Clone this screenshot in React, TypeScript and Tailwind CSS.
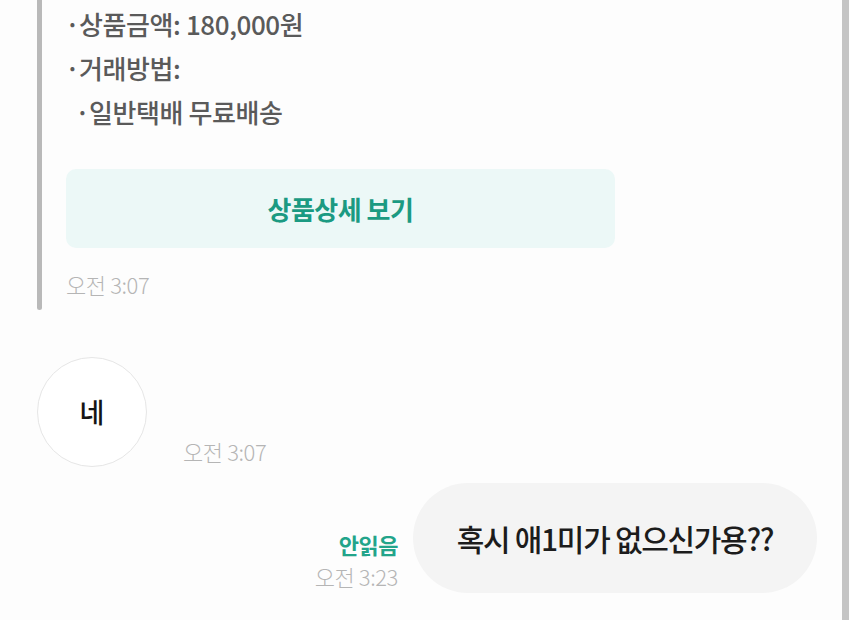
import React from "react";

const font = { fontFamily: '"Noto Sans CJK KR", "Noto Sans", sans-serif' };

function Line({ text, indent = false }: { text: string; indent?: boolean }) {
  return (
    <div
      className={
        indent
          ? "flex text-[26px] leading-[44px] font-medium text-[#5a5a5a] tracking-[-0.4px] pl-[10px]"
          : "flex text-[26px] leading-[44px] font-medium text-[#5a5a5a] tracking-[-0.4px]"
      }
    >
      <span className="inline-block w-[14px] text-center -ml-[1px]">·</span>
      <span>{text}</span>
    </div>
  );
}

export default function App() {
  return (
    <div
      className="w-[850px] h-[620px] overflow-hidden bg-[#fdfdfd] flex"
      style={font}
    >
      <div className="flex-1 flex flex-col">
        {/* Product card section */}
        <div className="flex pl-[37px]">
          <div className="w-[5px] bg-[#b9b9b9] rounded-b-full" />
          <div className="ml-[24px] flex flex-col pt-[2px] pb-[13px]">
            <Line text="상품금액: 180,000원" />
            <Line text="거래방법:" />
            <Line text="일반택배 무료배송" indent />
            <div className="mt-[35px] w-[549px] h-[79px] rounded-[10px] bg-[#ecf8f7] flex items-center justify-center">
              <span className="text-[26px] font-bold text-[#1b9a82] tracking-[-0.5px]">
                상품상세 보기
              </span>
            </div>
            <div className="mt-[23px] text-[22px] leading-[26px] font-light text-[#b5b5b5] tracking-[-0.4px]">
              오전 3:07
            </div>
          </div>
        </div>

        {/* Received message */}
        <div className="flex items-end pl-[37px] mt-[47px]">
          <div className="w-[110px] h-[110px] rounded-full border-[1.5px] border-[#e6e6e6] bg-white flex items-center justify-center">
            <span className="text-[27px] font-medium text-[#151515]">네</span>
          </div>
          <div className="ml-[36px] mb-[3px] text-[22px] leading-[26px] font-light text-[#b5b5b5] tracking-[-0.4px]">
            오전 3:07
          </div>
        </div>

        {/* Sent message */}
        <div className="flex items-end justify-end pr-[25px] mt-[16px]">
          <div className="flex flex-col items-end mr-[15px] mb-[4px]">
            <div className="text-[22px] leading-[30px] font-bold text-[#22a48a] tracking-[-0.5px]">
              안읽음
            </div>
            <div className="mt-[4px] text-[22px] leading-[26px] font-light text-[#b5b5b5] tracking-[-0.4px]">
              오전 3:23
            </div>
          </div>
          <div className="w-[404px] h-[110px] rounded-full bg-[#f4f4f4] flex items-center justify-center">
            <span className="text-[30px] font-medium text-[#1c1c1c] tracking-[-1.3px]">
              혹시 애1미가 없으신가용??
            </span>
          </div>
        </div>
      </div>
      <div className="w-[7px] bg-[#c4c4c4] mr-[1px]" />
    </div>
  );
}
